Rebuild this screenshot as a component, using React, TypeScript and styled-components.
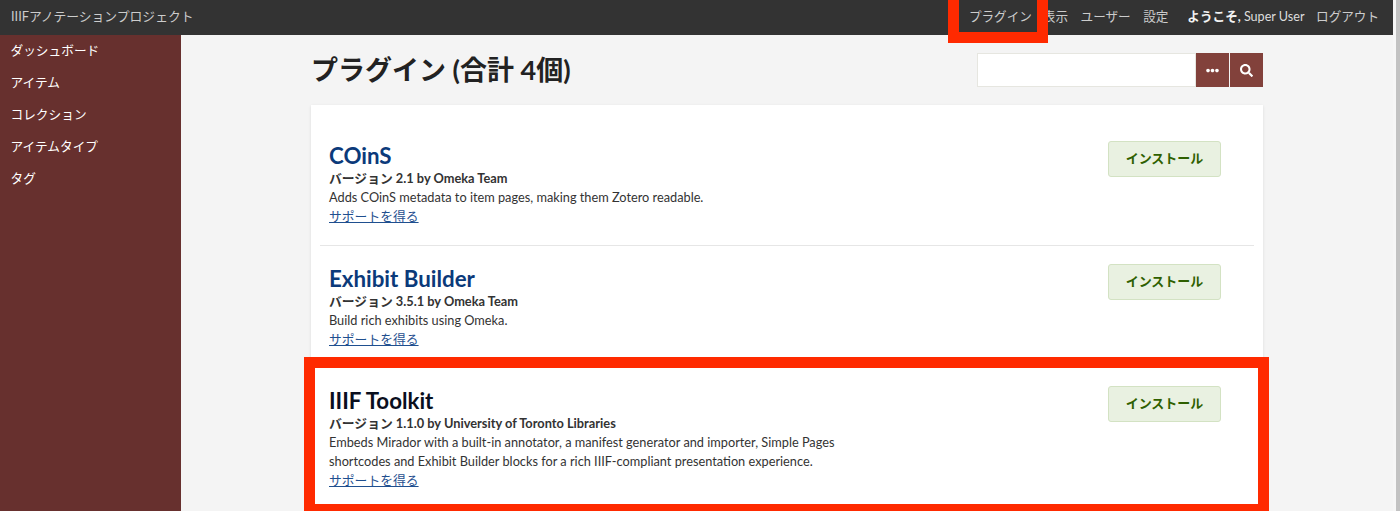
import React from 'react';
import styled, {createGlobalStyle} from 'styled-components';
import {FaEllipsisH, FaSearch} from 'react-icons/fa';

const GlobalStyle = createGlobalStyle`
  html, body {
    margin: 0;
    height: 511px;
    overflow: hidden;
    background: #f4f4f4;
    font-family: Lato, "Noto Sans CJK JP", sans-serif;
    color: #333;
  }
`;

const Page = styled.div`
  position: relative;
  width: 1400px;
  height: 511px;
  overflow: hidden;
`;
const TopBar = styled.header`
  height: 35px;
  background: #333;
  display: flex;
  align-items: center;
  justify-content: space-between;
  padding: 0 21px 5px 11px;
  box-sizing: border-box;
  font-size: 12.6px;
  color: #ccc;
`;
const SiteTitle = styled.div`
  font-size: 12.8px;
  color: #ccc;
`;
const TopNav = styled.nav`
  display: flex;
  gap: 12.5px;
  span:first-child {
    margin-right: -1.5px;
  }
`;
const Welcome = styled.span`
  color: #ddd;
  margin: 0 -1px 0 6.5px;
  b { font-weight: 700; color: #f2f2f2; }
`;
const Body = styled.div`
  display: flex;
  height: 476px;
`;
const Sidebar = styled.aside`
  width: 181px;
  flex: none;
  background: #67302e;
  padding: 7px 0 0 10.5px;
  box-sizing: border-box;
`;
const SideItem = styled.div`
  height: 32px;
  line-height: 16px;
  font-size: 12.7px;
  color: #fff;
`;
const Main = styled.main`
  width: 952px;
  margin-left: 130px;
`;
const TitleRow = styled.div`
  height: 70px;
  display: flex;
  align-items: center;
  justify-content: space-between;
`;
const Title = styled.h1`
  margin: 0 0 4px;
  font-size: 27px;
  font-weight: 700;
  color: #222;
`;
const Search = styled.div`
  display: flex;
  height: 34px;
`;
const SearchInput = styled.div`
  width: 219px;
  box-sizing: border-box;
  background: #fff;
  border: 1px solid #e6e6e0;
`;
const SearchButton = styled.div`
  width: 33px;
  background: #82413b;
  color: #fff;
  display: flex;
  align-items: center;
  justify-content: center;
  & + & {
    margin-left: 1px;
  }
`;
const Card = styled.section`
  background: #fff;
  box-shadow: 0 1px 3px rgba(0, 0, 0, .1);
  padding: 0 9px;
  height: 420px;
`;
const PluginRow = styled.div<{$first?: boolean; $last?: boolean}>`
  display: flex;
  justify-content: space-between;
  padding: ${p => (p.$first ? '36.5px' : '18.5px')} 33px 0 9px;
  height: ${p => (p.$first ? '141px' : '122px')};
  box-sizing: border-box;
  border-bottom: ${p => (p.$last ? 'none' : '1px solid #e6e6e6')};
`;
const Info = styled.div`
  width: 530px;
`;
const PluginName = styled.h2<{$plain?: boolean}>`
  margin: 0;
  font-size: 22.3px;
  line-height: 27.5px;
  font-weight: 700;
  color: ${p => (p.$plain ? '#0a0f1e' : '#0b3a7a')};
`;
const Version = styled.div`
  font-size: 12.8px;
  line-height: 19px;
  font-weight: 700;
`;
const Desc = styled.p`
  margin: 0;
  font-size: 12.75px;
  line-height: 19px;
`;
const Support = styled.a`
  display: block;
  font-size: 12.8px;
  line-height: 19px;
  color: #1f4f8f;
  text-decoration: underline;
`;
const InstallButton = styled.div`
  width: 113px;
  height: 36px;
  margin-top: -0.5px;
  padding-bottom: 3px;
  box-sizing: border-box;
  display: flex;
  align-items: center;
  justify-content: center;
  background: #e9f1e1;
  border: 1px solid #d3e2c3;
  border-radius: 3px;
  color: #2f6000;
  font-size: 13px;
  font-weight: 700;
`;
const Mark = styled.div<{$x: number; $y: number; $w: number; $h: number}>`
  position: absolute;
  left: ${p => p.$x}px;
  top: ${p => p.$y}px;
  width: ${p => p.$w}px;
  height: ${p => p.$h}px;
  box-sizing: border-box;
  border: 11px solid #ff2a00;
`;
const Scrollbar = styled.div`
  position: absolute;
  right: 0;
  top: 0;
  bottom: 0;
  width: 7px;
  box-sizing: border-box;
  background: #f6f6f6;
  border-right: 4px solid #c2c2c2;
`;

const plugins = [
  {name: 'COinS', version: 'バージョン 2.1 by Omeka Team', desc: ['Adds COinS metadata to item pages, making them Zotero readable.']},
  {name: 'Exhibit Builder', version: 'バージョン 3.5.1 by Omeka Team', desc: ['Build rich exhibits using Omeka.']},
  {
    name: 'IIIF Toolkit',
    version: 'バージョン 1.1.0 by University of Toronto Libraries',
    desc: [
      'Embeds Mirador with a built-in annotator, a manifest generator and importer, Simple Pages',
      'shortcodes and Exhibit Builder blocks for a rich IIIF-compliant presentation experience.',
    ],
  },
];

function App() {
  return (
    <Page>
      <GlobalStyle/>
      <TopBar>
        <SiteTitle>IIIFアノテーションプロジェクト</SiteTitle>
        <TopNav>
          <span>プラグイン</span>
          <span>表示</span>
          <span>ユーザー</span>
          <span>設定</span>
          <Welcome><b>ようこそ,</b> Super User</Welcome>
          <span>ログアウト</span>
        </TopNav>
      </TopBar>
      <Body>
        <Sidebar>
          <SideItem>ダッシュボード</SideItem>
          <SideItem>アイテム</SideItem>
          <SideItem>コレクション</SideItem>
          <SideItem>アイテムタイプ</SideItem>
          <SideItem>タグ</SideItem>
        </Sidebar>
        <Main>
          <TitleRow>
            <Title>プラグイン (合計 4個)</Title>
            <Search>
              <SearchInput/>
              <SearchButton><FaEllipsisH size={13}/></SearchButton>
              <SearchButton><FaSearch size={13}/></SearchButton>
            </Search>
          </TitleRow>
          <Card>
            {plugins.map((p, i) => (
              <PluginRow key={p.name} $first={i === 0} $last={i === 2}>
                <Info>
                  <PluginName $plain={i === 2}>{p.name}</PluginName>
                  <Version>{p.version}</Version>
                  {p.desc.map(line => <Desc key={line}>{line}</Desc>)}
                  <Support>サポートを得る</Support>
                </Info>
                <InstallButton>インストール</InstallButton>
              </PluginRow>
            ))}
          </Card>
        </Main>
      </Body>
      <Mark $x={948} $y={-11} $w={100} $h={54}/>
      <Mark $x={304} $y={357} $w={965} $h={158}/>
      <Scrollbar/>
    </Page>
  );
}

export default App;
